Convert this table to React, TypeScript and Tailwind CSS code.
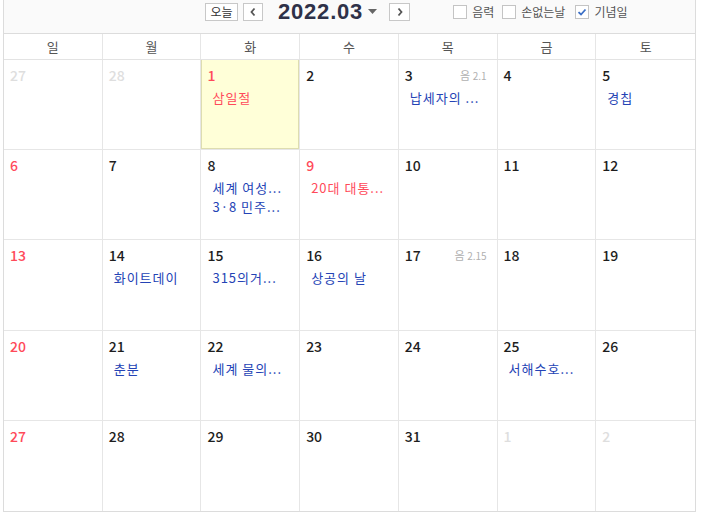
import React from "react";

type Cell = {
  d: number;
  tone?: "gray" | "red";
  today?: boolean;
  lunar?: string;
  events?: { t: string; red?: boolean }[];
};

const rows: Cell[][] = [
  [
    { d: 27, tone: "gray" },
    { d: 28, tone: "gray" },
    { d: 1, tone: "red", today: true, events: [{ t: "삼일절", red: true }] },
    { d: 2 },
    { d: 3, lunar: "2.1", events: [{ t: "납세자의 ..." }] },
    { d: 4 },
    { d: 5, events: [{ t: "경칩" }] },
  ],
  [
    { d: 6, tone: "red" },
    { d: 7 },
    { d: 8, events: [{ t: "세계 여성..." }, { t: "3·8 민주..." }] },
    { d: 9, tone: "red", events: [{ t: "20대 대통...", red: true }] },
    { d: 10 },
    { d: 11 },
    { d: 12 },
  ],
  [
    { d: 13, tone: "red" },
    { d: 14, events: [{ t: "화이트데이" }] },
    { d: 15, events: [{ t: "315의거..." }] },
    { d: 16, events: [{ t: "상공의 날" }] },
    { d: 17, lunar: "2.15" },
    { d: 18 },
    { d: 19 },
  ],
  [
    { d: 20, tone: "red" },
    { d: 21, events: [{ t: "춘분" }] },
    { d: 22, events: [{ t: "세계 물의..." }] },
    { d: 23 },
    { d: 24 },
    { d: 25, events: [{ t: "서해수호..." }] },
    { d: 26 },
  ],
  [
    { d: 27, tone: "red" },
    { d: 28 },
    { d: 29 },
    { d: 30 },
    { d: 31 },
    { d: 1, tone: "gray" },
    { d: 2, tone: "gray" },
  ],
];

const days = ["일", "월", "화", "수", "목", "금", "토"];

function Chevron({ dir }: { dir: "l" | "r" }) {
  return (
    <svg width="8" height="10" viewBox="0 0 8 10">
      {dir === "l" ? (
        <path d="M5.5 1.5 L2.5 5 L5.5 8.5" fill="none" stroke="#555" strokeWidth="1.8" />
      ) : (
        <path d="M2.5 1.5 L5.5 5 L2.5 8.5" fill="none" stroke="#555" strokeWidth="1.8" />
      )}
    </svg>
  );
}

function Check({ checked, label, ml }: { checked?: boolean; label: string; ml: string }) {
  return (
    <div className={`flex items-center ${ml}`}>
      <div className="w-[14px] h-[14px] border border-[#c4c4c4] bg-white flex items-center justify-center">
        {checked && (
          <svg width="10" height="10" viewBox="0 0 10 10">
            <path d="M1.5 5.2 L4 7.5 L8.5 2.5" fill="none" stroke="#3b6fc6" strokeWidth="1.8" />
          </svg>
        )}
      </div>
      <span className="ml-[5px] text-[12px] text-[#555] leading-[14px]">{label}</span>
    </div>
  );
}

export default function App() {
  return (
    <div
      className="w-[708px] h-[518px] bg-white"
      style={{ fontFamily: '"Noto Sans CJK KR", "Liberation Sans", sans-serif' }}
    >
      <div className="ml-[3px] w-[693px] border-l border-r border-b border-[#dcdcdc]">
        {/* top bar */}
        <div className="h-[34px] bg-[#fafafa] border-b border-[#dcdcdc]">
          <div className="flex items-center h-[23px] pl-[201px]">
            <div className="w-[33px] h-[18px] border border-[#c8c8c8] bg-white flex items-center justify-center text-[12px] text-[#333] leading-none">
              오늘
            </div>
            <div className="ml-[5px] w-[20px] h-[18px] border border-[#c8c8c8] bg-white flex items-center justify-center">
              <Chevron dir="l" />
            </div>
            <div
              className="ml-[15px] text-[22px] font-bold text-[#2e3148] leading-none tracking-[0.8px]"
              style={{ fontFamily: '"Liberation Sans", Arial, sans-serif' }}
            >
              2022.03
            </div>
            <svg className="ml-[5px]" width="9" height="5" viewBox="0 0 9 5">
              <path d="M0 0 L9 0 L4.5 5 Z" fill="#666" />
            </svg>
            <div className="ml-[12px] w-[21px] h-[18px] border border-[#c8c8c8] bg-white flex items-center justify-center">
              <Chevron dir="r" />
            </div>
            <Check label="음력" ml="ml-[43px]" />
            <Check label="손없는날" ml="ml-[8px]" />
            <Check label="기념일" ml="ml-[10px]" checked />
          </div>
        </div>
        {/* day names */}
        <div className="grid grid-cols-7 h-[26px] border-b border-[#e3e3e3]">
          {days.map((d, i) => (
            <div
              key={d}
              className={`flex items-center justify-center text-[13px] text-[#555] ${
                i < 6 ? "border-r border-[#e6e6e6]" : ""
              }`}
            >
              {d}
            </div>
          ))}
        </div>
        {/* weeks */}
        <div className="grid grid-rows-5 h-[451px]">
          {rows.map((row, ri) => (
            <div key={ri} className={`grid grid-cols-7 ${ri < 4 ? "border-b border-[#e6e6e6]" : ""}`}>
              {row.map((c, ci) => {
                const numColor =
                  c.tone === "gray" ? "text-[#dedede]" : c.tone === "red" ? "text-[#ff4a5a]" : "text-[#1e1e1e]";
                return (
                  <div
                    key={ci}
                    className={`pt-[5px] pl-[6px] pr-[10px] ${
                      c.today ? "bg-[#ffffd8] shadow-[inset_1px_0_0_#deddb0,inset_-1px_0_0_#deddb0,inset_0_-1px_0_#deddb0]" : ""
                    } ${ci < 6 ? "border-r border-[#e6e6e6]" : ""} ${c.today ? "border-[#deddb0]" : ""}`}
                  >
                    <div className="flex items-center justify-between h-[20px]">
                      <span className={`text-[14px] font-medium leading-[20px] ${numColor}`}>{c.d}</span>
                      {c.lunar && (
                        <span className="text-[11px] text-[#b0b0b0] leading-[20px]">
                          음 <span className="text-[10px]">{c.lunar}</span>
                        </span>
                      )}
                    </div>
                    {c.events && (
                      <div className="mt-[3px] pl-[5px]">
                        {c.events.map((e, ei) => (
                          <div
                            key={ei}
                            className={`text-[13px] leading-[19px] tracking-[1px] whitespace-nowrap ${
                              e.red ? "text-[#ff4a5a]" : "text-[#2443b5]"
                            }`}
                          >
                            {e.t}
                          </div>
                        ))}
                      </div>
                    )}
                  </div>
                );
              })}
            </div>
          ))}
        </div>
      </div>
    </div>
  );
}
